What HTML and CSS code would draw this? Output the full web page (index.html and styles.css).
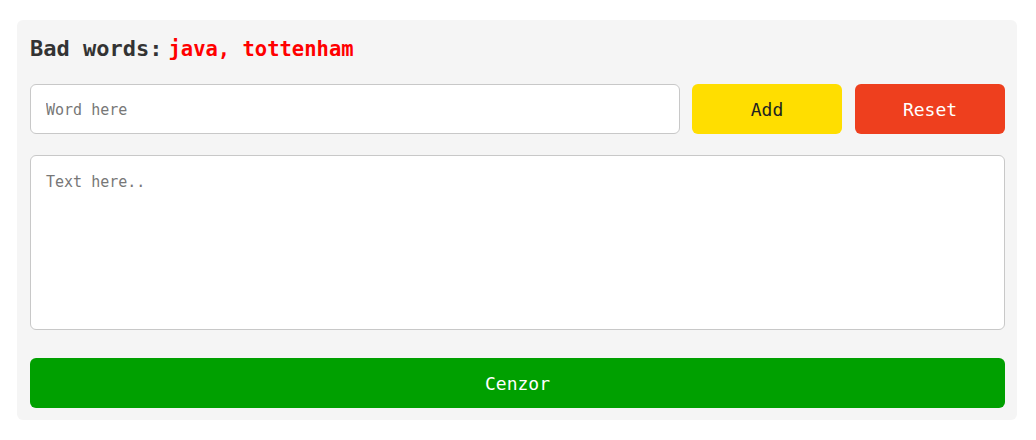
FILE: index.html
```html
<!DOCTYPE html>
<html>
<head>
<meta charset="utf-8">
<link rel="stylesheet" href="styles.css">
</head>
<body>
<div class="card">
  <h2 class="title">Bad words:<span class="words">java, tottenham</span></h2>
  <div class="row">
    <input class="word-input" type="text" placeholder="Word here">
    <button class="btn btn-add">Add</button>
    <button class="btn btn-reset">Reset</button>
  </div>
  <textarea class="text" placeholder="Text here.."></textarea>
  <button class="btn btn-cenzor">Cenzor</button>
</div>
</body>
</html>
```
FILE: styles.css
```css
html, body {
  margin: 0;
  background: #fff;
}
body {
  padding: 20px 19px 20px 17px;
  font-family: "DejaVu Sans Mono", "Liberation Mono", monospace;
}
.card {
  background: #f5f5f5;
  border-radius: 6px;
  padding: 13px 12px 12px 13px;
  display: flex;
  flex-direction: column;
}
.title {
  margin: 2px 0 0;
  height: 28px;
  line-height: 28px;
  font-size: 22px;
  font-weight: bold;
  color: #333;
}
.words {
  color: #ff0000;
  font-size: 20.5px;
  margin-left: 6px;
}
.row {
  display: flex;
  gap: 12px;
  margin-top: 21px;
}
.word-input {
  flex: 1;
  height: 50px;
  box-sizing: border-box;
  border: 1px solid #c8c8c8;
  border-radius: 6px;
  padding: 1px 15px 0;
  font-family: inherit;
  font-size: 15px;
  background: #fff;
  outline: none;
}
.word-input::placeholder, .text::placeholder {
  color: #777;
}
.btn {
  border: none;
  border-radius: 6px;
  height: 50px;
  font-family: inherit;
  font-size: 18px;
  cursor: pointer;
}
.btn-add {
  width: 150px;
  background: #ffde00;
  color: #222;
}
.btn-reset {
  width: 150px;
  margin-left: 1px;
  background: #ee3f1e;
  color: #fff;
}
.text {
  margin-top: 21px;
  height: 175px;
  box-sizing: border-box;
  border: 1px solid #c8c8c8;
  border-radius: 6px;
  padding: 17px 15px 15px;
  font-family: inherit;
  font-size: 15px;
  background: #fff;
  resize: none;
  outline: none;
}
.btn-cenzor {
  margin-top: 28px;
  width: 100%;
  background: #00a000;
  color: #fff;
}
```
